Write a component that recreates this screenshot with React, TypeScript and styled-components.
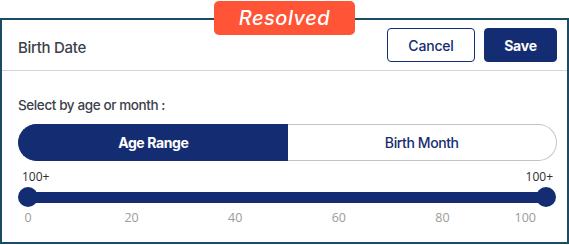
import React from 'react';
import styled, { createGlobalStyle } from 'styled-components';

const NAVY = '#142d72';

const GlobalStyle = createGlobalStyle`
  html, body {
    margin: 0;
    padding: 0;
    background: #ffffff;
  }
  body {
    font-family: Inter, "Noto Sans", sans-serif;
  }
`;

const Frame = styled.div`
  position: relative;
  width: 569px;
  height: 245px;
  padding-top: 18px;
  box-sizing: border-box;
`;

const Badge = styled.div`
  position: absolute;
  top: 1px;
  left: 214px;
  width: 141px;
  height: 34px;
  border-radius: 5px;
  background: #ff5435;
  color: #ffffff;
  font-family: Inter, sans-serif;
  font-style: italic;
  font-size: 20px;
  font-weight: 500;
  letter-spacing: 0.5px;
  display: flex;
  align-items: center;
  justify-content: center;
  z-index: 1;
`;

const Card = styled.div`
  width: 569px;
  height: 226px;
  box-sizing: border-box;
  border: 2px solid #1a4d63;
  display: flex;
  flex-direction: column;
`;

const Header = styled.div`
  height: 51px;
  box-sizing: border-box;
  padding: 8px 10px 0 16px;
  display: flex;
  align-items: flex-start;
  justify-content: space-between;
  border-bottom: 1px solid #d4d4d4;
`;

const Title = styled.div`
  margin-top: 10px;
  font-size: 15px;
  font-weight: 500;
  color: #3c404b;
  letter-spacing: -0.3px;
`;

const Actions = styled.div`
  display: flex;
  gap: 9px;
`;

const Button = styled.button<{ $primary?: boolean; $width: number }>`
  width: ${(p) => p.$width}px;
  height: 34px;
  border-radius: 4px;
  border: 1px solid ${NAVY};
  background: ${(p) => (p.$primary ? NAVY : '#ffffff')};
  color: ${(p) => (p.$primary ? '#ffffff' : NAVY)};
  font-family: Inter, sans-serif;
  font-size: 14px;
  font-weight: ${(p) => (p.$primary ? 700 : 500)};
  letter-spacing: -0.2px;
  padding: 0;
  cursor: pointer;
`;

const Body = styled.div`
  padding: 25px 10px 0 16px;
  display: flex;
  flex-direction: column;
`;

const Label = styled.div`
  font-size: 13.5px;
  font-weight: 500;
  color: #3c404b;
  letter-spacing: -0.4px;
  line-height: 18px;
`;

const Toggle = styled.div`
  margin-top: 10px;
  height: 37px;
  display: grid;
  grid-template-columns: 1fr 1fr;
`;

const ToggleOption = styled.button<{ $active?: boolean; $side: 'left' | 'right' }>`
  border: 1px solid ${(p) => (p.$active ? NAVY : '#c4c4c4')};
  ${(p) => (p.$side === 'left' ? 'border-right: none;' : 'border-left: none;')}
  border-radius: ${(p) => (p.$side === 'left' ? '19px 0 0 19px' : '0 19px 19px 0')};
  background: ${(p) => (p.$active ? NAVY : '#ffffff')};
  color: ${(p) => (p.$active ? '#ffffff' : NAVY)};
  font-family: Inter, sans-serif;
  font-size: 14px;
  font-weight: ${(p) => (p.$active ? 700 : 500)};
  letter-spacing: -0.4px;
  padding: 0;
  cursor: pointer;
`;

const Slider = styled.div`
  margin-top: 8px;
  display: flex;
  flex-direction: column;
  padding: 0 2px 0 0;
`;

const ValueRow = styled.div`
  display: flex;
  justify-content: space-between;
  padding: 0 2px 0 4px;
  font-family: "Open Sans", sans-serif;
  font-size: 12px;
  color: #2e2e2e;
  line-height: 16px;
`;

const Track = styled.div`
  position: relative;
  margin: 2px 9px 0 10px;
  height: 20px;
  display: flex;
  align-items: center;
`;

const Bar = styled.div`
  flex: 1;
  height: 11px;
  background: ${NAVY};
`;

const Thumb = styled.div`
  position: absolute;
  top: 0;
  width: 20px;
  height: 20px;
  border-radius: 50%;
  background: ${NAVY};
  transform: translateX(-50%);
`;

const Marks = styled.div`
  position: relative;
  margin: 2px 9px 0 10px;
  height: 18px;
  font-family: "Open Sans", sans-serif;
  font-size: 12.5px;
  color: #9b9b9b;
`;

const Mark = styled.span<{ $last?: boolean }>`
  position: absolute;
  top: 0;
  transform: translateX(${(p) => (p.$last ? '-100%' : '-50%')});
`;

const marks = [0, 20, 40, 60, 80, 100];

const App: React.FC = () => (
  <>
    <GlobalStyle />
    <Frame>
      <Badge>Resolved</Badge>
      <Card>
        <Header>
          <Title>Birth Date</Title>
          <Actions>
            <Button $width={88}>Cancel</Button>
            <Button $primary $width={73}>Save</Button>
          </Actions>
        </Header>
        <Body>
          <Label>Select by age or month :</Label>
          <Toggle>
            <ToggleOption $active $side="left">Age Range</ToggleOption>
            <ToggleOption $side="right">Birth Month</ToggleOption>
          </Toggle>
          <Slider>
            <ValueRow>
              <span>100+</span>
              <span>100+</span>
            </ValueRow>
            <Track>
              <Bar />
              <Thumb style={{ left: '0%' }} />
              <Thumb style={{ left: '100%' }} />
            </Track>
            <Marks>
              {marks.map((m) => (
                <Mark
                  key={m}
                  $last={m === 100}
                  style={{ left: m === 100 ? 'calc(100% - 10px)' : `${m}%` }}
                >
                  {m}
                </Mark>
              ))}
            </Marks>
          </Slider>
        </Body>
      </Card>
    </Frame>
  </>
);

export default App;
